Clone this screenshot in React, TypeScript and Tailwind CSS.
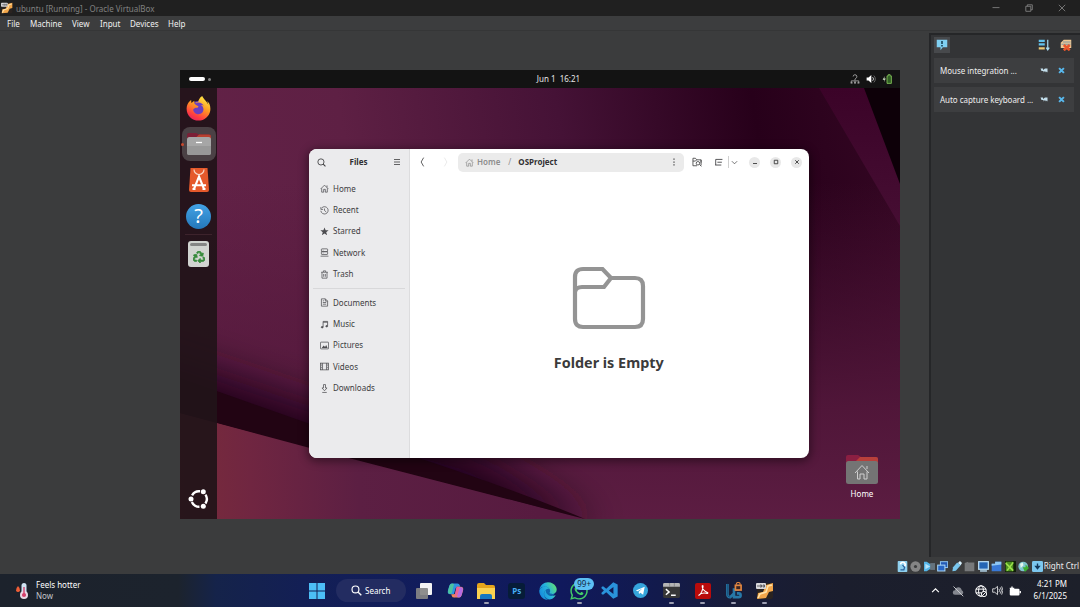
import React from "react";
import { FaEdge, FaFirefoxBrowser, FaRecycle, FaWhatsapp } from "react-icons/fa";

type IconProps = { className?: string; children?: React.ReactNode; box?: string };

function Svg({ className = "", children, box = "0 0 16 16" }: IconProps) {
  return (
    <svg viewBox={box} className={`shrink-0 ${className}`} fill="none" stroke="currentColor" strokeWidth="1.3">
      {children}
    </svg>
  );
}

const menus = [
  { label: "File", cls: "w-[23px]" },
  { label: "Machine", cls: "w-[42px]" },
  { label: "View", cls: "w-[28px]" },
  { label: "Input", cls: "w-[30px]" },
  { label: "Devices", cls: "w-[38px]" },
  { label: "Help", cls: "w-[24px]" },
];

function VBoxGuestIcon({ className = "" }: { className?: string }) {
  return (
    <Svg box="0 0 18 18" className={className}>
      <rect x="1" y="1" width="16" height="16" rx="2" fill="#2a2320" stroke="none" />
      <path d="M17 1v8l-4 1-3 6-9 1 1-6 5-1 3-7z" fill="#f2a64a" stroke="none" />
      <path d="M16 3l-4 1-2 6-6 2-2 4" stroke="#ffe2a8" strokeWidth="1.6" />
      <rect x="0" y="1" width="10" height="6" rx="1" fill="#d9d9dc" stroke="none" />
      <path d="M2 3v2M4 3h1.500v2H4zM7 3h1.500v2H7z" stroke="#44444a" strokeWidth=".8" />
    </Svg>
  );
}

function TitleBar() {
  return (
    <div className="flex h-4 shrink-0 items-center bg-[#202020] text-[#808080]">
      <VBoxGuestIcon className="ml-[1px] h-3 w-3" />
      <span className="ml-[3px] mt-[1px]">ubuntu [Running] - Oracle VirtualBox</span>
      <div className="ml-auto flex items-center gap-[24px] pr-[14px] text-[#8a8a8a]">
        <Svg className="h-2 w-2" box="0 0 8 8"><path d="M.5 3.6h7" strokeWidth=".8" /></Svg>
        <Svg className="ml-[1px] h-2 w-2" box="0 0 8 8"><path d="M.8 2.3h5v5h-5zM2.3 2.2V.8h5v5H5.9" strokeWidth=".8" /></Svg>
        <Svg className="ml-[1px] h-2 w-2" box="0 0 8 8"><path d="M.8.8l6.4 6.4M7.2.8L.8 7.2" strokeWidth=".8" /></Svg>
      </div>
    </div>
  );
}

function MenuBar() {
  return (
    <div className="flex h-[15px] shrink-0 items-center border-b border-[#353637] bg-[#3c3d3e] pl-[7px] pt-[1px] text-[#f0f0f0]">
      {menus.map((m) => (
        <span key={m.label} className={m.cls}>{m.label}</span>
      ))}
    </div>
  );
}

function Wallpaper() {
  return (
    <svg viewBox="0 0 720 449" className="absolute inset-0 h-full w-full" preserveAspectRatio="none">
      <defs>
        <linearGradient id="wpBase" x1="0" y1="0.4" x2="1" y2="0.3">
          <stop offset="0" stopColor="#632247" />
          <stop offset="0.25" stopColor="#5e2044" />
          <stop offset="0.55" stopColor="#451236" />
          <stop offset="0.82" stopColor="#27001a" />
          <stop offset="1" stopColor="#330622" />
        </linearGradient>
        <linearGradient id="wpLow" x1="0" y1="0" x2="0" y2="1">
          <stop offset="0.25" stopColor="#54183c" stopOpacity="0" />
          <stop offset="0.75" stopColor="#54183c" stopOpacity="0.9" />
          <stop offset="1" stopColor="#5c1d42" />
        </linearGradient>
        <linearGradient id="wpWarm" x1="0" y1="449" x2="360" y2="430" gradientUnits="userSpaceOnUse">
          <stop offset="0" stopColor="#7a2c3a" />
          <stop offset="0.2" stopColor="#702641" />
          <stop offset="0.5" stopColor="#5c1f43" />
          <stop offset="1" stopColor="#571b40" />
        </linearGradient>
        <linearGradient id="wpStrip" x1="0" y1="0" x2="0" y2="1">
          <stop offset="0" stopColor="#3b0328" />
          <stop offset="1" stopColor="#460e33" />
        </linearGradient>
        <filter id="wpBlur" x="-30%" y="-60%" width="160%" height="220%">
          <feGaussianBlur stdDeviation="20" />
        </filter>
      </defs>
      <rect width="720" height="449" fill="url(#wpBase)" />
      <rect width="720" height="449" fill="url(#wpLow)" />
      <path d="M-60 272L130 336L300 385L415 455L0 449L-60 400z" fill="#22031a" filter="url(#wpBlur)" />
      <path d="M0 343L130 377L405 449H0z" fill="url(#wpWarm)" />
      <path d="M0 308L130 354Q300 405 405 449L130 378L0 343z" fill="#220413" />
      <path d="M639 18H720V156z" fill="url(#wpStrip)" />
      <path d="M684 18H720V114z" fill="#0d0008" />
    </svg>
  );
}

function GnomeBar() {
  return (
    <div className="relative flex h-[18px] shrink-0 items-center bg-[#131313] px-[8.500px] text-[#e6e6e6]">
      <div className="flex flex-1 items-center gap-[3px]">
        <span className="h-[4px] w-4 rounded-full bg-white" />
        <span className="h-[3px] w-[3px] rounded-full bg-[#858585]" />
      </div>
      <span className="-mr-[2px] ml-[35px] whitespace-pre">Jun 1  16:21</span>
      <div className="flex flex-1 items-center justify-end gap-[6px]">
        <Svg className="h-[10px] w-[10px] text-[#b5b5b5]">
          <path d="M5 4a3 3 0 1 1 4 3l-1 1v2M2 14v-3h12v3M8 11v3" strokeWidth="1.3" />
          <path d="M1 14h3M6.500 14h3M12 14h3" strokeWidth="2" />
        </Svg>
        <Svg className="h-[10px] w-[10px]">
          <path d="M1 5.500h3L8.500 1.500v13L4 10.500H1z" fill="#fff" stroke="none" />
          <path d="M10.500 5a4 4 0 0 1 0 6" />
          <path d="M12.500 2.500a7.500 7.500 0 0 1 0 11" stroke="#777" />
        </Svg>
        <Svg className="h-[10px] w-[10px]">
          <path d="M8 3h2V1h3v2h2v12H8z" fill="#315f24" stroke="#87c95c" />
          <path d="M4.500 3L1 9h3l-1 4 3-6H3.500z" fill="#d9f0cc" stroke="none" />
        </Svg>
      </div>
    </div>
  );
}

function Dock() {
  return (
    <div className="relative flex w-[37px] shrink-0 flex-col items-center bg-[#211319]/93 pt-[2px]">
      <svg width="0" height="0" className="absolute">
        <defs>
          <linearGradient id="fox" x1="0.8" y1="0" x2="0.3" y2="1">
            <stop offset="0" stopColor="#fff04a" />
            <stop offset="0.45" stopColor="#ff9a22" />
            <stop offset="0.8" stopColor="#ff4040" />
            <stop offset="1" stopColor="#e8235e" />
          </linearGradient>
        </defs>
      </svg>
      <div className="flex h-9 w-full items-center justify-center">
        <div className="relative flex h-[25px] w-[25px] items-center justify-center">
          <span className="absolute left-[4px] top-[5px] h-[17px] w-[17px] rounded-full bg-[#6b3fc0]" />
          <FaFirefoxBrowser className="relative h-[25px] w-[25px]" fill="url(#fox)" />
        </div>
      </div>
      <div className="relative mt-[1px] flex h-[34px] w-[34px] items-center justify-center rounded-[8px] bg-[#4b4145]">
        <span className="absolute -left-[1px] top-[16px] h-[3px] w-[3px] rounded-full bg-[#c9482e]" />
        <Svg box="0 0 26 24" className="h-6 w-[26px]">
          <path d="M1 3q0-2 2-2h7l3 1.500h10q2 0 2 2v9H1z" fill="#7b1f36" stroke="none" />
          <path d="M13 2.500h10q2 0 2 2v3H8z" fill="#b8402f" stroke="none" />
          <rect x="1" y="5" width="24" height="18" rx="2.500" fill="#a6a6a6" stroke="none" />
          <path d="M1 14h24v6.500q0 2.500-2.500 2.500h-19Q1 23 1 20.500z" fill="#989898" stroke="none" />
          <path d="M10 10.500h6" stroke="#fff" strokeWidth="1.3" />
        </Svg>
      </div>
      <div className="flex h-[38px] items-center">
        <Svg box="0 0 22 26" className="h-[26px] w-[22px]">
          <path d="M2.500 1h17L21 23q0 2-2 2H3q-2 0-2-2z" fill="#e5592b" stroke="none" />
          <path d="M6 2.500a5 5 0 0 0 10 0" stroke="#f8d6c4" strokeWidth="1.200" />
          <path d="M4.500 22h3M14.500 22h3M6 22L11 9.500L16 22M4 18.200h14" stroke="#fff" strokeWidth="2.100" />
        </Svg>
      </div>
      <div className="flex h-[34px] items-center">
        <div className="flex h-[25px] w-[25px] items-center justify-center rounded-full bg-linear-to-b from-[#43a3e6] to-[#2477ba] text-[20px] leading-none text-white">?</div>
      </div>
      <div className="mt-[1px] h-px w-[27px] bg-[#3d232c]" />
      <div className="flex h-[38px] items-center">
        <div className="flex h-[26px] w-[21px] flex-col items-center rounded-[3px] bg-[#d2d4d1] pt-[2px]">
          <span className="h-[3px] w-[17px] rounded-full bg-[#858585]" />
          <FaRecycle className="mt-[5px] h-3 w-3 text-[#368a3b]" stroke="#368a3b" strokeWidth="30" />
        </div>
      </div>
      <Svg box="0 0 22 22" className="mb-[9px] mt-auto h-[22px] w-[22px] text-white">
        <circle cx="11" cy="11" r="7.800" strokeWidth="2.400" strokeDasharray="9.500 6.836" strokeDashoffset="-3.500" transform="rotate(-60 11 11)" />
        <circle cx="3" cy="11" r="2.500" fill="#fff" stroke="none" />
        <circle cx="15.300" cy="3.800" r="2.500" fill="#fff" stroke="none" />
        <circle cx="15.300" cy="18.200" r="2.500" fill="#fff" stroke="none" />
      </Svg>
    </div>
  );
}

const homeGlyph = <path d="M1 9L8 2l7 7M3 8v6.500h3.500v-5h3v5H13V8M12.500 6V2.500" />;

const places = [
  { label: "Home", icon: homeGlyph },
  { label: "Recent", icon: <><path d="M3 3.500a6.500 6.500 0 1 1-1.500 5M1.500 2v4h4M8 4.500V8l3 2.500" /></> },
  { label: "Starred", icon: <path d="M8 .8l2 5h5.300l-4.200 3.400 1.600 5.300L8 11.400l-4.700 3.100 1.600-5.300L.7 5.800H6z" fill="currentColor" stroke="none" /> },
  { label: "Network", icon: <><rect x="2.500" y="1.500" width="11" height="5" rx="1" /><rect x="2.500" y="6.500" width="11" height="5" rx="1" /><path d="M1 14.500h14M5 4h1M5 9h1" /></> },
  { label: "Trash", icon: <><path d="M2 4h12M6 3.500V1.500h4v2M3.500 4v10.500h9V4M6.500 7v5M9.500 7v5" /></> },
];

const folders = [
  { label: "Documents", icon: <path d="M2.500 1.500h7l4 4v9h-11zM9.500 1.500v4h4M5 8h6M5 11h6M5 5h2" /> },
  { label: "Music", icon: <><path d="M5.500 12.500v-10h8v8M5.500 4h8" strokeWidth="1.400" /><ellipse cx="3.900" cy="12.800" rx="1.700" ry="1.300" fill="currentColor" /><ellipse cx="11.900" cy="11" rx="1.700" ry="1.300" fill="currentColor" /></> },
  { label: "Pictures", icon: <><rect x=".8" y="2" width="14.400" height="12" rx="1" /><path d="M3 12.500L6.500 8 9 10.500 11 7l2.500 5.500z" fill="currentColor" stroke="none" /></> },
  { label: "Videos", icon: <><rect x="1" y="2" width="14" height="12" /><path d="M4.500 2v12M11.500 2v12" /><path d="M2.500 3v10M13.500 3v10" strokeDasharray="1.500 1.500" /></> },
  { label: "Downloads", icon: <path d="M6.200 1h3.600v6h2.700L8 12 3.500 7h2.700zM4 15h8" /> },
];

function PlaceRow({ label, icon }: { label: string; icon: React.ReactNode }) {
  return (
    <div className="flex h-[21.4px] items-center pl-[11px]">
      <Svg className="h-[9px] w-[9px] text-[#4c4c50]">{icon}</Svg>
      <span className="ml-[4px]">{label}</span>
    </div>
  );
}

function FilesWindow() {
  return (
    <div className="absolute left-[129px] top-[79px] flex h-[309px] w-[500px] overflow-hidden rounded-[8px] bg-white text-[#3d3d3f] shadow-[0_2px_9px_2px_rgba(0,0,0,0.4)]">
      <div className="w-[101px] shrink-0 border-r border-[#dcdcde] bg-[#ebebed]">
        <div className="flex h-[26px] items-center justify-between pl-[8px] pr-[8px]">
          <Svg className="h-[9px] w-[9px]"><circle cx="7" cy="7" r="5.500" strokeWidth="1.500" /><path d="M11 11l4 4" strokeWidth="1.900" /></Svg>
          <span className="-ml-[2px] font-bold text-[#303032]">Files</span>
          <Svg className="h-2 w-2"><path d="M2 3h12M2 8h12M2 13h12" strokeWidth="1.600" /></Svg>
        </div>
        <div className="mt-[3px]">
          {places.map((p) => <PlaceRow key={p.label} {...p} />)}
          <div className="mx-1 my-[3px] h-px bg-[#d8d8da]" />
          {folders.map((p) => <PlaceRow key={p.label} {...p} />)}
        </div>
      </div>
      <div className="flex min-w-0 flex-1 flex-col">
        <div className="flex h-[26px] shrink-0 items-center pl-[8px]">
          <Svg className="h-[10px] w-[10px]"><path d="M9 1L5 8l4 7" /></Svg>
          <Svg className="ml-[12px] h-[10px] w-[10px] text-[#e6e6e6]"><path d="M7 1l4 7-4 7" /></Svg>
          <div className="ml-[8px] flex h-[19px] w-[226px] items-center rounded-[5px] bg-[#ebebeb] pl-[7px] pr-[8px]">
            <Svg className="h-[9px] w-[9px] text-[#8d8d8d]">{homeGlyph}</Svg>
            <span className="ml-[3px] font-semibold text-[#8d8d8d]">Home</span>
            <span className="ml-[8px] text-[#8d8d8d]">/</span>
            <span className="ml-[7px] font-bold text-[#303032]">OSProject</span>
            <Svg box="0 0 4 10" className="ml-auto h-[10px] w-[4px]"><path d="M2 1.500v1.300M2 4.400v1.300M2 7.300v1.300" strokeWidth="1.200" /></Svg>
          </div>
          <Svg className="ml-[8px] h-[10px] w-[10px]"><path d="M8 14H1.500V2h4l2 2.500h7V9M1.500 6.500h4l2-2" /><circle cx="9.500" cy="10" r="2.800" /><path d="M12 12l3 3M14.500 4.500v9" /></Svg>
          <Svg className="ml-[12px] h-[9px] w-[9px]"><path d="M3 2.500h12M6 7.500h8M2 12.500h11M3 2.500v10" strokeWidth="1.500" /></Svg>
          <span className="ml-[5px] h-[12px] w-px bg-[#cfcfcf]" />
          <Svg className="ml-[2px] h-[7px] w-[7px]"><path d="M2 5l6 6 6-6" strokeWidth="1.600" /></Svg>
          <div className="ml-auto flex gap-[10px] pr-[7px]">
            {["M4 11h8", "M4.500 4.500h7v7h-7z", "M4.500 4.500l7 7M11.500 4.500l-7 7"].map((d) => (
              <span key={d} className="flex h-[11px] w-[11px] items-center justify-center rounded-full bg-[#e8e8e8]">
                <Svg className="h-2 w-2 text-[#303030]"><path d={d} strokeWidth="1.700" /></Svg>
              </span>
            ))}
          </div>
        </div>
        <div className="flex flex-col items-center pr-[1.500px] pt-[90.500px]">
          <Svg box="0 0 74 64" className="h-16 w-[74px] text-[#949494]">
            <path d="M3 26V11q0-8 8-8H30.500L39 12H63q8 0 8 8V53q0 8-8 8H11q-8 0-8-8zM3 26q1-5 7-5H32L39 12" strokeWidth="4.200" />
          </Svg>
          <h1 className="mt-[22.500px] text-[14.400px] font-bold leading-[22px] text-[#3b3b3b]">Folder is Empty</h1>
        </div>
      </div>
    </div>
  );
}

function VirtualScreen() {
  return (
    <div className="relative flex h-[449px] w-[720px] flex-col overflow-hidden">
      <Wallpaper />
      <GnomeBar />
      <div className="relative flex min-h-0 flex-1">
        <Dock />
      </div>
      <FilesWindow />
      <div className="absolute left-[662px] top-[384px] flex w-10 flex-col items-center text-white">
        <Svg box="0 0 32 31" className="h-[31px] w-8">
          <path d="M0 3q0-2 2-2h10l3 2h15q2 0 2 2v10H0z" fill="#8b1f42" stroke="none" />
          <path d="M14 3h16q2 0 2 2v4H8z" fill="#b8403b" stroke="none" />
          <rect y="7" width="32" height="23" rx="2.500" fill="#747474" stroke="none" />
          <path d="M9 19l7-7.500 7 7.500M11.500 17.500V25h2.500v-5h4v5h3v-7.500M21 15v-3" stroke="#cfcfcf" strokeWidth="1" />
        </Svg>
        <span className="mt-[3px] leading-3">Home</span>
      </div>
    </div>
  );
}

function Notice({ text }: { text: string }) {
  return (
    <div className="flex h-[25px] items-center bg-[#3d3e40] pl-[6px] pr-[9px] text-[#ededed]">
      <span className="whitespace-nowrap tracking-[-0.04px]">{text}</span>
      <Svg className="ml-auto h-2 w-2"><path d="M1 3h5v3l4-3h5v8l-2-2-1 2-2-3-3 3V8H3z" fill="#c3deeb" stroke="none" /></Svg>
      <Svg className="ml-[10px] h-[7px] w-[7px] text-[#58b7ec]"><path d="M2.500 2.500l11 11M13.500 2.500l-11 11" strokeWidth="4.500" /></Svg>
    </div>
  );
}

function NotificationPanel() {
  return (
    <div className="mt-[2px] flex flex-1 flex-col gap-[4px] border-l-2 border-t-2 border-[#252628] bg-[#333436] pl-[3px] pr-[6px]">
      <div className="flex h-[19px] items-end pb-[1px] pr-[6px]">
        <div className="flex h-4 w-4 items-center justify-center bg-[#47494c]">
          <Svg className="h-3 w-3"><path d="M1 1h14v10H9l-3 4v-4H1z" fill="#7fd0f2" stroke="none" /><path d="M8 2.500v4M8 8v2" stroke="#10394c" strokeWidth="2" /></Svg>
        </div>
        <Svg className="mb-[2px] ml-auto h-3 w-3"><path d="M1 2.500h8M1 7h8" stroke="#62c2ee" strokeWidth="3" /><path d="M1 12.500h8" stroke="#e9c878" strokeWidth="3" /><path d="M13 1v13M11 11.500l2 3 2-3" stroke="#a9ddf5" strokeWidth="1.600" /></Svg>
        <Svg className="-mr-[4px] mb-[2px] ml-[10px] h-3 w-3"><path d="M5 1h10v11H1V5z" fill="#f0c894" stroke="none" /><path d="M4 4h10M2 7h12" stroke="#7a94a0" /><path d="M5 8l8 7M13 8l-8 7" stroke="#e9562c" strokeWidth="3.500" /></Svg>
      </div>
      <Notice text="Mouse integration ..." />
      <Notice text="Auto capture keyboard ..." />
    </div>
  );
}

const statusIcons: React.ReactNode[] = [
  <><rect x="1" y="0" width="14" height="16" rx="1" fill="#8fd0ee" /><path d="M5 5a3.500 3.500 0 1 1 5 3.500" stroke="#fff" strokeWidth="2.500" /><path d="M8 6l3 3-1 4H5" stroke="#27609c" strokeWidth="1.800" /></>,
  <><circle cx="8" cy="8" r="7.500" fill="#858585" /><circle cx="8" cy="8" r="2.300" fill="#3c3d3e" /></>,
  <><path d="M0 1h4l6 4v6l-6 4H0z" fill="#55b5e8" /><path d="M9 3h7v10H9z" fill="#65737d" /><path d="M2 4l7 4-7 4z" fill="#b7e4fa" /></>,
  <><rect x="5" y="1" width="10.500" height="8.500" fill="#2359b5" stroke="#8fc3ef" strokeWidth="1.500" /><rect x="1" y="6" width="10.500" height="8.500" fill="#2866c5" stroke="#a8d5f6" strokeWidth="1.500" /></>,
  <><path d="M2 15l1-6 6-7 5 4-7 8z" fill="#79c6ed" /><path d="M10 3l3-3 3 3-2 3z" fill="#d9f2ff" /></>,
  <path d="M1 3l5-2v1h9v13H1z" fill="#77797b" />,
  <><rect x="1" y="1" width="14" height="11" fill="#2465b5" stroke="#bce1f8" strokeWidth="1.800" /><path d="M3 14.500h10" stroke="#bce1f8" strokeWidth="2" /></>,
  <><path d="M1 4h5V1h9v14H1z" fill="#3979d7" /><path d="M1 4h5V1h9v4L1 7z" fill="#8fc7f3" /></>,
  <><rect width="16" height="16" fill="#101d08" /><path d="M1 1h11v14H1z" fill="#4c8f22" /><path d="M1 3l11 11M12 2L3 14" stroke="#9be04c" strokeWidth="2.400" /></>,
  <><circle cx="7.500" cy="8" r="7" fill="#7ec4ce" /><path d="M3 4l4-2 1 4-4 4z" fill="#e4f7ee" /><path d="M7 9h4V5l5 5-6 6z" fill="#3dae31" /></>,
  <><rect x="0" y="0" width="16" height="16" rx="2" fill="#7cc7ef" /><path d="M8 3.500v4M5.500 8h5L8 11z" fill="#12385c" stroke="#12385c" strokeWidth="2" /></>,
];

function StatusBar() {
  return (
    <div className="flex h-[17px] shrink-0 items-center justify-end gap-[2.500px] whitespace-nowrap pr-[1px] pt-[1px] text-[#ededed]">
      {statusIcons.map((icon, i) => (
        <svg key={i} viewBox="0 0 16 16" className="h-[11px] w-[11px] shrink-0" fill="none">{icon}</svg>
      ))}
      <span className="-ml-[1.500px]">Right Ctrl</span>
    </div>
  );
}

function WindowsApps() {
  const apps: { icon: React.ReactNode; running?: boolean }[] = [
    { icon: <Svg box="0 0 18 18" className="h-[18px] w-[18px]"><rect x="5" y="1" width="12" height="12" rx="1" fill="#f3f3f3" stroke="none" /><rect x="1" y="6" width="12" height="11" rx="1" fill="#858585" fillOpacity=".92" stroke="none" /></Svg> },
    {
      icon: (
        <Svg box="0 0 18 18" className="h-[17px] w-[17px]">
          <path d="M5 1.500h6q2 0 2.500 2L14 5h-3q-1.500 0-2 2l-1.700 6H3.500Q0 13 1 9l1.500-5Q3.200 1.500 5 1.500z" fill="#2e94e0" stroke="none" />
          <path d="M1.300 8.500L2.600 4Q3.300 1.700 5.300 1.500L7.500 2 5.500 10q-.5 2.800-2 2.800Q.3 12.500 1.300 8.500z" fill="#4cc3a0" stroke="none" />
          <path d="M13 16.500H7.500q-2 0-2.500-2L4.500 13H7q1.500 0 2-2l1.700-6h3.800q3.500 0 2.500 4l-1.500 5q-.7 2.500-2.500 2.500z" fill="#f08a55" stroke="none" />
          <path d="M16.700 9.500L15.400 14q-.7 2.300-2.700 2.500l-2.200-.5 2-8q.5-2.800 2-2.800 3.200.3 2.200 4.300z" fill="#b76be2" stroke="none" />
          <path d="M10 5h3l-2 8q-1 3-3.500 3.500 1-1 .9-3.500z" fill="#e9629c" stroke="none" />
        </Svg>
      ),
    },
    { running: true, icon: <Svg box="0 0 18 18" className="h-[18px] w-[18px]"><path d="M0 3q0-2 2-2h5l2 2h7q2 0 2 2v12H0z" fill="#e6a51b" stroke="none" /><path d="M0 6h18v11H0z" fill="#fbd250" stroke="none" /><path d="M3 17v-3q0-2 2-2h8q2 0 2 2v3z" fill="#1878c2" stroke="none" /></Svg> },
    { icon: <span className="-ml-[1px] flex h-4 w-[17px] items-center justify-center rounded-[3px] bg-[#061c38] font-bold text-[#45adf5]">Ps</span> },
    {
      icon: (
        <span className="relative -ml-[1px] flex">
          <span className="absolute left-[2px] top-[2px] h-[14px] w-[14px] rounded-full bg-[#1167ad]" />
          <FaEdge className="relative h-[18px] w-[18px]" fill="url(#edgeFill)" />
        </span>
      ),
    },
    {
      running: true,
      icon: (
        <span className="relative flex">
          <FaWhatsapp className="h-5 w-5 text-[#43cd68]" />
          <span className="absolute -right-[5px] -top-[3px] flex h-3 w-5 items-center justify-center rounded-full bg-[#5cc0f4] text-[#10253f]">99+</span>
        </span>
      ),
    },
    { icon: <Svg box="0 0 100 100" className="-ml-[1px] h-[17px] w-[17px]"><path fillRule="evenodd" d="M72 2l26 12v72L72 98 31 61 12 75 3 70V63L17 50 3 37V30l9-5 19 14zM73 29L46 50l27 21z" fill="#2a93dc" stroke="none" /></Svg> },
    { icon: <Svg className="-ml-[1px] h-[15px] w-[15px]"><circle cx="8" cy="8" r="8" fill="#35a5dc" stroke="none" /><path d="M3 8l9.500-4-1.700 8.500-3-2.200-1.400 1.300-.4-2.300 4-3.500-5 3z" fill="#fff" stroke="none" /></Svg> },
    { running: true, icon: <Svg box="0 0 18 16" className="h-[15px] w-[17px]"><rect width="18" height="16" rx="1.500" fill="#373737" stroke="none" /><path d="M0 1.500Q0 0 1.500 0h15Q18 0 18 1.500V4H0z" fill="#b5b5b5" stroke="none" /><path d="M6 0h1v4M12 0v4" stroke="#777" strokeWidth=".7" /><path d="M3 6.500l3.500 3L3 12.500M8.500 13h5" stroke="#fff" strokeWidth="1.500" /></Svg> },
    { running: true, icon: <Svg className="h-4 w-4"><rect width="16" height="16" rx="2" fill="#b90b0b" stroke="none" /><path d="M3.500 12.500Q7.500 10 8 3.500q.2-1.500-.8-.5Q7 7 12.800 9.800q.2 1.200-1.500.5Q7 9 3.500 12.500z" stroke="#fff" strokeWidth="1.100" /></Svg> },
    { running: true, icon: <Svg box="0 0 18 18" className="h-[17px] w-[18px]"><path d="M2 2v11q0 3 3 3l4-4V8h5M9 12v4h5q2 0 2-2t-2-2h-2" stroke="#2778a7" strokeWidth="2.800" /><path d="M2 2v11q0 3 3 3" stroke="#164f7b" strokeWidth="1" /><rect x="10.500" y="3.500" width="6" height="5" fill="#3b2523" stroke="#e28640" strokeWidth="1.800" /><path d="M11.500 3v-1q0-1.500 2-1.500t2 1.500v1" stroke="#e28640" strokeWidth="1.200" /></Svg> },
    { running: true, icon: <VBoxGuestIcon className="h-[18px] w-[18px]" /> },
  ];
  return (
    <div className="flex h-full">
      {apps.map((a, i) => (
        <div key={i} className="relative flex h-full w-[30.950px] items-center justify-center">
          {a.icon}
          {a.running && <span className="absolute bottom-[3.500px] h-[2px] w-[5px] rounded-full bg-[#9d9fb2]" />}
        </div>
      ))}
    </div>
  );
}

function Taskbar() {
  return (
    <div className="flex h-[33px] shrink-0 items-center bg-[linear-gradient(90deg,#1c222c_0%,#1c232d_16.500%,#15234a_20%,#131f55_28%,#111c5c_40%,#10195c_52%,#121a4c_61%,#181c38_68%,#1b1e2d_78%,#1d202a_100%)] text-white">
      <svg width="0" height="0" className="absolute">
        <defs>
          <linearGradient id="edgeFill" x1="0" y1="0.7" x2="1" y2="0.2">
            <stop offset="0" stopColor="#1589dd" />
            <stop offset="0.5" stopColor="#27b5dc" />
            <stop offset="1" stopColor="#63df72" />
          </linearGradient>
        </defs>
      </svg>
      <div className="flex w-[308px] items-center pl-[15px]">
        <Svg box="0 0 14 18" className="h-[18px] w-[14px]">
          <rect x="6.500" y="1" width="5" height="13" rx="2.500" fill="#cfe2f2" stroke="none" />
          <circle cx="9" cy="13" r="4" fill="#e9d9e6" stroke="none" />
          <circle cx="9" cy="13" r="2.100" fill="#d6416c" stroke="none" />
          <path d="M9 5v7" stroke="#d6416c" strokeWidth="1.400" />
          <path d="M3 4q2.500 2.500 2 4.500Q4.500 10 3 10T1 8.500Q1 6 3 4z" fill="#ef5e37" stroke="none" />
        </Svg>
        <div className="-mt-[1px] ml-[7px] leading-[11px]">
          <div>Feels hotter</div>
          <div className="text-[#c3c6cb]">Now</div>
        </div>
      </div>
      <Svg box="0 0 18 18" className="h-[18px] w-[18px]">
        <path d="M1 1h7.500v7.500H1zM9.500 1H17v7.500H9.500zM1 9.500h7.500V17H1zM9.500 9.500H17V17H9.500z" fill="#4cbef6" stroke="none" />
      </Svg>
      <div className="ml-[10px] mr-[3px] flex h-[23px] w-[70px] items-center rounded-full bg-[#232c61] pl-[15px]">
        <Svg className="h-[11px] w-[11px]"><circle cx="6.500" cy="6.500" r="5" strokeWidth="1.700" /><path d="M10.500 10.500L15 15" strokeWidth="1.900" /></Svg>
        <span className="ml-[3px]">Search</span>
      </div>
      <WindowsApps />
      <div className="ml-auto flex items-center pr-[13px]">
        <Svg className="h-[9px] w-[9px]"><path d="M2 11l6-6 6 6" strokeWidth="2" /></Svg>
        <Svg className="ml-[12px] h-3 w-3"><path d="M4 13q-3 0-3-3t3-3q1-4 4.500-4T13 7q2 1 2 3t-2 3z" fill="#858890" stroke="none" /><path d="M2 2l13 13" stroke="#c5c7cc" /></Svg>
        <Svg className="ml-[11px] h-3 w-3"><circle cx="8" cy="8" r="7" /><ellipse cx="8" cy="8" rx="3.200" ry="7" /><path d="M1 5.500h14M1 10.500h8" /><circle cx="12" cy="12" r="3.500" fill="#1c1f2b" /><path d="M9.700 14.300l4.600-4.600" /></Svg>
        <Svg className="ml-[5px] h-[11px] w-[11px]"><path d="M1 5.500h3L8 2v12l-4-3.500H1zM10 5.500q2 2.500 0 5M12 3.500q3.500 4.500 0 9M14 2q4 6 0 12" strokeWidth="1.100" /></Svg>
        <Svg className="ml-[6px] h-3 w-3"><rect x="1" y="5" width="13" height="9" rx="1.500" fill="#fff" stroke="none" /><path d="M15 8v3" strokeWidth="1.800" /><path d="M1 4.500h6M4 2v4" stroke="#fff" strokeWidth="1.800" /></Svg>
        <div className="-mt-[2px] ml-[12.500px] text-right leading-[11.500px]">
          <div>4:21 PM</div>
          <div>6/1/2025</div>
        </div>
      </div>
    </div>
  );
}

export default function App() {
  return (
    <div className="flex h-[607px] w-[1080px] flex-col overflow-hidden bg-[#3b3c3d] font-['Noto_Sans',sans-serif] text-[8px] leading-none">
      <TitleBar />
      <MenuBar />
      <div className="flex min-h-0 flex-1">
        <div className="w-[929px] shrink-0 pl-[180px] pt-[39px]">
          <VirtualScreen />
        </div>
        <NotificationPanel />
      </div>
      <StatusBar />
      <Taskbar />
    </div>
  );
}
